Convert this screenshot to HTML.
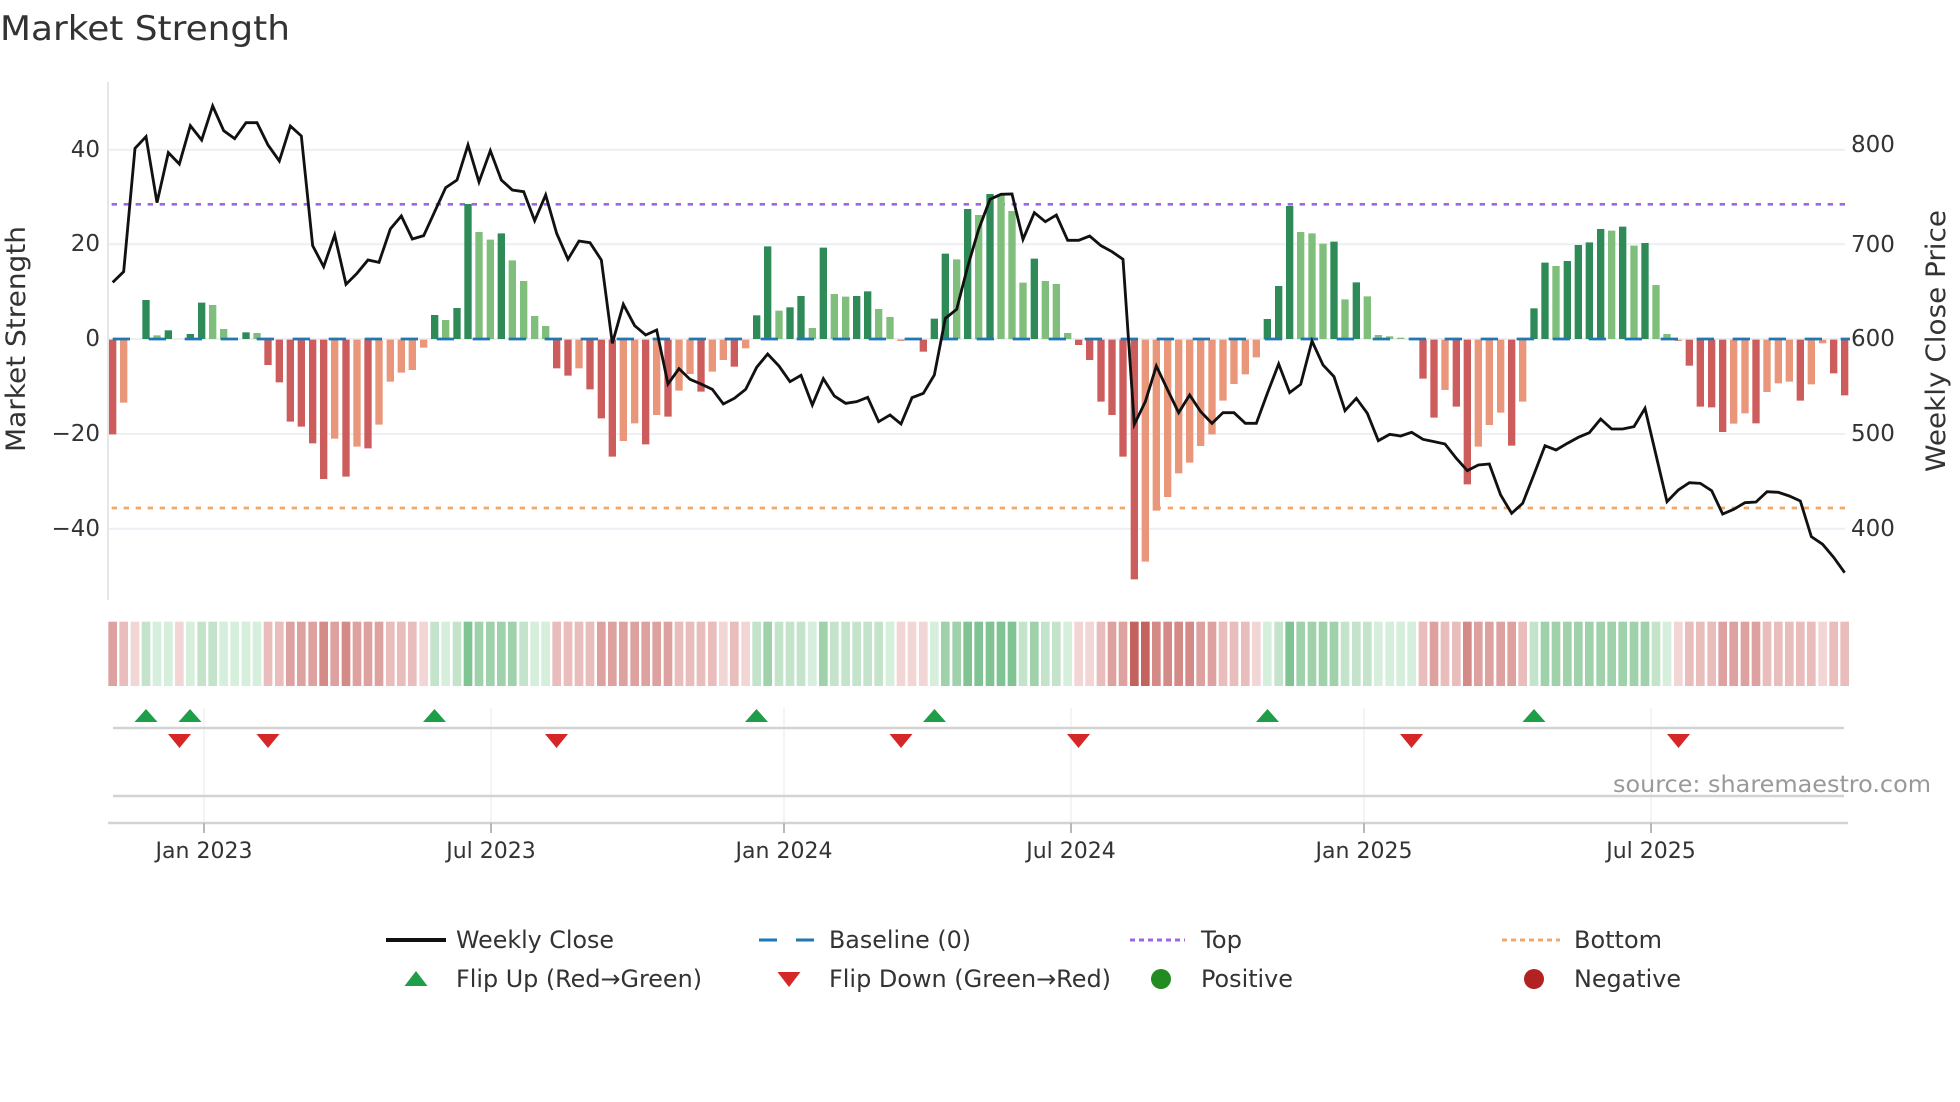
<!DOCTYPE html>
<html><head><meta charset="utf-8"><style>
html,body{margin:0;padding:0;background:#fff;width:1960px;height:1102px;overflow:hidden}
svg{display:block}
text{font-family:"DejaVu Sans","Liberation Sans",sans-serif;fill:#333}
.D{stroke:#2e8b57}.L{stroke:#7fbf7b}.R{stroke:#cd5c5c}.S{stroke:#e9967a}
.K1{fill:#c4625e}.K2{fill:#d48a87}.K3{fill:#dda2a0}.K4{fill:#e8bdbc}.K5{fill:#f2d6d6}
.G1{fill:#80c494}.G2{fill:#9fd2ab}.G3{fill:#c3e4ca}.G4{fill:#d6eedc}
</style></head><body>
<svg width="1960" height="1102" viewBox="0 0 1960 1102" xmlns="http://www.w3.org/2000/svg">
<text x="0" y="40" font-size="34" textLength="290" lengthAdjust="spacingAndGlyphs">Market Strength</text>
<g stroke="#eceff3" stroke-width="2">
<line x1="108" y1="149.7" x2="1845" y2="149.7"/><line x1="108" y1="244.3" x2="1845" y2="244.3"/>
<line x1="108" y1="339" x2="1845" y2="339"/><line x1="108" y1="434" x2="1845" y2="434"/>
<line x1="108" y1="528.7" x2="1845" y2="528.7"/>
</g>
<line x1="108" y1="82" x2="108" y2="600" stroke="#e6e6e6" stroke-width="2"/>
<g font-size="23" text-anchor="end" dominant-baseline="central">
<text x="100" y="150">40</text><text x="100" y="244">20</text><text x="100" y="339">0</text><text x="100" y="434">−20</text><text x="100" y="529">−40</text>
</g>
<g font-size="23" dominant-baseline="central">
<text x="1851" y="145">800</text><text x="1851" y="245">700</text><text x="1851" y="339">600</text><text x="1851" y="434">500</text><text x="1851" y="529">400</text>
</g>
<text transform="translate(25,339) rotate(-90)" font-size="27" text-anchor="middle" textLength="226" lengthAdjust="spacingAndGlyphs">Market Strength</text>
<text transform="translate(1945,341) rotate(-90)" font-size="27" text-anchor="middle" textLength="262" lengthAdjust="spacingAndGlyphs">Weekly Close Price</text>

<g transform="translate(105,80) scale(0.333333)">
<line x1="20" y1="373" x2="5230" y2="373" stroke="#a066e0" stroke-width="8" stroke-dasharray="16 20"/>
<line x1="20" y1="1284" x2="5230" y2="1284" stroke="#f0a868" stroke-width="8" stroke-dasharray="16 20"/>
<g stroke-width="22">
<line class="R" x1="23" y1="779" x2="23" y2="1063"/><line class="S" x1="56" y1="779" x2="56" y2="968"/>
<line class="D" x1="123" y1="777" x2="123" y2="660"/><line class="L" x1="156" y1="777" x2="156" y2="766"/>
<line class="D" x1="190" y1="777" x2="190" y2="751"/><line class="D" x1="256" y1="777" x2="256" y2="762"/>
<line class="D" x1="290" y1="777" x2="290" y2="668"/><line class="L" x1="323" y1="777" x2="323" y2="675"/>
<line class="L" x1="356" y1="777" x2="356" y2="747"/><line class="D" x1="423" y1="777" x2="423" y2="757"/>
<line class="L" x1="456" y1="777" x2="456" y2="759"/><line class="R" x1="489" y1="779" x2="489" y2="855"/>
<line class="R" x1="523" y1="779" x2="523" y2="907"/><line class="R" x1="556" y1="779" x2="556" y2="1025"/>
<line class="R" x1="589" y1="779" x2="589" y2="1040"/><line class="R" x1="623" y1="779" x2="623" y2="1090"/>
<line class="R" x1="656" y1="779" x2="656" y2="1197"/><line class="S" x1="689" y1="779" x2="689" y2="1076"/>
<line class="R" x1="723" y1="779" x2="723" y2="1190"/><line class="S" x1="756" y1="779" x2="756" y2="1100"/>
<line class="R" x1="789" y1="779" x2="789" y2="1105"/><line class="S" x1="822" y1="779" x2="822" y2="1034"/>
<line class="S" x1="856" y1="779" x2="856" y2="905"/><line class="S" x1="889" y1="779" x2="889" y2="878"/>
<line class="S" x1="922" y1="779" x2="922" y2="870"/><line class="S" x1="956" y1="779" x2="956" y2="803"/>
<line class="D" x1="989" y1="777" x2="989" y2="705"/><line class="L" x1="1022" y1="777" x2="1022" y2="720"/>
<line class="D" x1="1056" y1="777" x2="1056" y2="684"/><line class="D" x1="1089" y1="777" x2="1089" y2="372"/>
<line class="L" x1="1122" y1="777" x2="1122" y2="456"/><line class="L" x1="1156" y1="777" x2="1156" y2="479"/>
<line class="D" x1="1189" y1="777" x2="1189" y2="460"/><line class="L" x1="1222" y1="777" x2="1222" y2="541"/>
<line class="L" x1="1256" y1="777" x2="1256" y2="603"/><line class="L" x1="1289" y1="777" x2="1289" y2="708"/>
<line class="L" x1="1322" y1="777" x2="1322" y2="738"/><line class="R" x1="1355" y1="779" x2="1355" y2="865"/>
<line class="R" x1="1389" y1="779" x2="1389" y2="887"/><line class="S" x1="1422" y1="779" x2="1422" y2="865"/>
<line class="R" x1="1455" y1="779" x2="1455" y2="928"/><line class="R" x1="1489" y1="779" x2="1489" y2="1015"/>
<line class="R" x1="1522" y1="779" x2="1522" y2="1130"/><line class="S" x1="1555" y1="779" x2="1555" y2="1083"/>
<line class="S" x1="1589" y1="779" x2="1589" y2="1030"/><line class="R" x1="1622" y1="779" x2="1622" y2="1093"/>
<line class="S" x1="1655" y1="779" x2="1655" y2="1005"/><line class="R" x1="1689" y1="779" x2="1689" y2="1010"/>
<line class="S" x1="1722" y1="779" x2="1722" y2="932"/><line class="S" x1="1755" y1="779" x2="1755" y2="882"/>
<line class="R" x1="1788" y1="779" x2="1788" y2="935"/><line class="S" x1="1822" y1="779" x2="1822" y2="875"/>
<line class="S" x1="1855" y1="779" x2="1855" y2="840"/><line class="R" x1="1888" y1="779" x2="1888" y2="860"/>
<line class="S" x1="1922" y1="779" x2="1922" y2="805"/><line class="D" x1="1955" y1="777" x2="1955" y2="706"/>
<line class="D" x1="1988" y1="777" x2="1988" y2="499"/><line class="L" x1="2022" y1="777" x2="2022" y2="692"/>
<line class="D" x1="2055" y1="777" x2="2055" y2="682"/><line class="D" x1="2088" y1="777" x2="2088" y2="648"/>
<line class="L" x1="2122" y1="777" x2="2122" y2="744"/><line class="D" x1="2155" y1="777" x2="2155" y2="503"/>
<line class="L" x1="2188" y1="777" x2="2188" y2="642"/><line class="L" x1="2222" y1="777" x2="2222" y2="650"/>
<line class="D" x1="2255" y1="777" x2="2255" y2="648"/><line class="D" x1="2288" y1="777" x2="2288" y2="634"/>
<line class="L" x1="2321" y1="777" x2="2321" y2="687"/><line class="L" x1="2355" y1="777" x2="2355" y2="711"/>
<line class="R" x1="2388" y1="779" x2="2388" y2="782"/><line class="R" x1="2455" y1="779" x2="2455" y2="815"/>
<line class="D" x1="2488" y1="777" x2="2488" y2="716"/><line class="D" x1="2521" y1="777" x2="2521" y2="521"/>
<line class="L" x1="2555" y1="777" x2="2555" y2="538"/><line class="D" x1="2588" y1="777" x2="2588" y2="387"/>
<line class="L" x1="2621" y1="777" x2="2621" y2="405"/><line class="D" x1="2655" y1="777" x2="2655" y2="342"/>
<line class="L" x1="2688" y1="777" x2="2688" y2="345"/><line class="L" x1="2721" y1="777" x2="2721" y2="393"/>
<line class="L" x1="2754" y1="777" x2="2754" y2="608"/><line class="D" x1="2788" y1="777" x2="2788" y2="536"/>
<line class="L" x1="2821" y1="777" x2="2821" y2="603"/><line class="L" x1="2854" y1="777" x2="2854" y2="612"/>
<line class="L" x1="2888" y1="777" x2="2888" y2="759"/><line class="R" x1="2921" y1="779" x2="2921" y2="795"/>
<line class="R" x1="2954" y1="779" x2="2954" y2="840"/><line class="R" x1="2988" y1="779" x2="2988" y2="965"/>
<line class="R" x1="3021" y1="779" x2="3021" y2="1005"/><line class="R" x1="3054" y1="779" x2="3054" y2="1130"/>
<line class="R" x1="3088" y1="779" x2="3088" y2="1498"/><line class="S" x1="3121" y1="779" x2="3121" y2="1445"/>
<line class="S" x1="3154" y1="779" x2="3154" y2="1292"/><line class="S" x1="3188" y1="779" x2="3188" y2="1251"/>
<line class="S" x1="3221" y1="779" x2="3221" y2="1180"/><line class="S" x1="3254" y1="779" x2="3254" y2="1148"/>
<line class="S" x1="3287" y1="779" x2="3287" y2="1098"/><line class="S" x1="3321" y1="779" x2="3321" y2="1063"/>
<line class="S" x1="3354" y1="779" x2="3354" y2="962"/><line class="S" x1="3387" y1="779" x2="3387" y2="912"/>
<line class="S" x1="3421" y1="779" x2="3421" y2="883"/><line class="S" x1="3454" y1="779" x2="3454" y2="832"/>
<line class="D" x1="3487" y1="777" x2="3487" y2="717"/><line class="D" x1="3521" y1="777" x2="3521" y2="618"/>
<line class="D" x1="3554" y1="777" x2="3554" y2="378"/><line class="L" x1="3587" y1="777" x2="3587" y2="456"/>
<line class="L" x1="3621" y1="777" x2="3621" y2="460"/><line class="L" x1="3654" y1="777" x2="3654" y2="491"/>
<line class="D" x1="3687" y1="777" x2="3687" y2="485"/><line class="L" x1="3720" y1="777" x2="3720" y2="658"/>
<line class="D" x1="3754" y1="777" x2="3754" y2="607"/><line class="L" x1="3787" y1="777" x2="3787" y2="649"/>
<line class="L" x1="3820" y1="777" x2="3820" y2="765"/><line class="L" x1="3854" y1="777" x2="3854" y2="769"/>
<line class="L" x1="3887" y1="777" x2="3887" y2="773"/><line class="R" x1="3954" y1="779" x2="3954" y2="896"/>
<line class="R" x1="3987" y1="779" x2="3987" y2="1013"/><line class="S" x1="4020" y1="779" x2="4020" y2="930"/>
<line class="R" x1="4054" y1="779" x2="4054" y2="980"/><line class="R" x1="4087" y1="779" x2="4087" y2="1213"/>
<line class="S" x1="4120" y1="779" x2="4120" y2="1100"/><line class="S" x1="4153" y1="779" x2="4153" y2="1035"/>
<line class="S" x1="4187" y1="779" x2="4187" y2="998"/><line class="R" x1="4220" y1="779" x2="4220" y2="1097"/>
<line class="S" x1="4253" y1="779" x2="4253" y2="965"/><line class="D" x1="4287" y1="777" x2="4287" y2="685"/>
<line class="D" x1="4320" y1="777" x2="4320" y2="548"/><line class="L" x1="4353" y1="777" x2="4353" y2="558"/>
<line class="D" x1="4387" y1="777" x2="4387" y2="543"/><line class="D" x1="4420" y1="777" x2="4420" y2="495"/>
<line class="D" x1="4453" y1="777" x2="4453" y2="487"/><line class="D" x1="4487" y1="777" x2="4487" y2="447"/>
<line class="L" x1="4520" y1="777" x2="4520" y2="452"/><line class="D" x1="4553" y1="777" x2="4553" y2="440"/>
<line class="L" x1="4587" y1="777" x2="4587" y2="497"/><line class="D" x1="4620" y1="777" x2="4620" y2="489"/>
<line class="L" x1="4653" y1="777" x2="4653" y2="615"/><line class="L" x1="4686" y1="777" x2="4686" y2="762"/>
<line class="S" x1="4720" y1="779" x2="4720" y2="783"/><line class="R" x1="4753" y1="779" x2="4753" y2="857"/>
<line class="R" x1="4786" y1="779" x2="4786" y2="980"/><line class="R" x1="4820" y1="779" x2="4820" y2="982"/>
<line class="R" x1="4853" y1="779" x2="4853" y2="1056"/><line class="S" x1="4886" y1="779" x2="4886" y2="1031"/>
<line class="S" x1="4920" y1="779" x2="4920" y2="1000"/><line class="R" x1="4953" y1="779" x2="4953" y2="1030"/>
<line class="S" x1="4986" y1="779" x2="4986" y2="936"/><line class="S" x1="5020" y1="779" x2="5020" y2="910"/>
<line class="S" x1="5053" y1="779" x2="5053" y2="905"/><line class="R" x1="5086" y1="779" x2="5086" y2="962"/>
<line class="S" x1="5119" y1="779" x2="5119" y2="913"/><line class="S" x1="5153" y1="779" x2="5153" y2="790"/>
<line class="R" x1="5186" y1="779" x2="5186" y2="880"/><line class="R" x1="5219" y1="779" x2="5219" y2="946"/>
</g>
<line x1="23" y1="777" x2="5235" y2="777" stroke="#1f77b4" stroke-width="8" stroke-dasharray="52 56"/>
<polyline fill="none" stroke="#111" stroke-width="8.5" stroke-linejoin="miter" points="23,607 56,575 90,205 123,170 156,368 190,218 223,252 256,137 290,180 323,78 356,152 389,176 423,128 456,128 489,195 523,243 556,138 589,168 623,497 656,560 689,465 723,613 756,580 789,540 822,547 856,447 889,408 922,477 956,467 989,395 1022,323 1056,300 1089,195 1122,306 1156,212 1189,300 1222,330 1256,335 1289,422 1322,345 1355,460 1389,538 1422,483 1455,488 1489,540 1522,790 1555,673 1589,737 1622,765 1655,750 1689,912 1722,866 1755,898 1788,912 1822,928 1855,972 1888,955 1922,928 1955,862 1988,822 2022,858 2055,905 2088,886 2122,975 2155,896 2188,948 2222,970 2255,965 2288,952 2321,1025 2355,1005 2388,1032 2421,953 2455,940 2488,885 2521,715 2555,688 2588,560 2621,448 2655,358 2688,343 2721,342 2754,478 2788,398 2821,425 2854,405 2888,481 2921,481 2954,468 2988,497 3021,515 3054,538 3088,1033 3121,965 3154,858 3188,930 3221,998 3254,945 3287,995 3321,1030 3354,998 3387,998 3421,1030 3454,1030 3487,940 3521,852 3554,938 3587,913 3621,783 3654,855 3687,890 3720,992 3754,955 3787,1000 3820,1082 3854,1063 3887,1068 3920,1057 3954,1078 3987,1085 4020,1092 4054,1135 4087,1172 4120,1155 4153,1152 4187,1245 4220,1300 4253,1270 4287,1183 4320,1097 4353,1110 4387,1090 4420,1072 4453,1058 4487,1017 4520,1047 4553,1047 4587,1040 4620,985 4653,1125 4686,1265 4720,1230 4753,1208 4786,1210 4820,1232 4853,1302 4886,1288 4920,1268 4953,1266 4986,1235 5020,1237 5053,1248 5086,1263 5119,1370 5153,1393 5186,1432 5219,1478"/>
<g transform="translate(-13,1625)">
<rect class="K3" x="23" width="26" height="193"/><rect class="K4" x="56" width="26" height="193"/><rect class="K5" x="90" width="26" height="193"/><rect class="G3" x="123" width="26" height="193"/><rect class="G4" x="156" width="26" height="193"/><rect class="G4" x="190" width="26" height="193"/><rect class="K5" x="223" width="26" height="193"/><rect class="G4" x="256" width="26" height="193"/><rect class="G3" x="290" width="26" height="193"/><rect class="G3" x="323" width="26" height="193"/><rect class="G4" x="356" width="26" height="193"/><rect class="G4" x="389" width="26" height="193"/><rect class="G4" x="423" width="26" height="193"/><rect class="G4" x="456" width="26" height="193"/>
<rect class="K4" x="489" width="26" height="193"/><rect class="K4" x="523" width="26" height="193"/><rect class="K3" x="556" width="26" height="193"/><rect class="K3" x="589" width="26" height="193"/><rect class="K3" x="623" width="26" height="193"/><rect class="K2" x="656" width="26" height="193"/><rect class="K3" x="689" width="26" height="193"/><rect class="K2" x="723" width="26" height="193"/><rect class="K3" x="756" width="26" height="193"/><rect class="K3" x="789" width="26" height="193"/><rect class="K3" x="822" width="26" height="193"/><rect class="K4" x="856" width="26" height="193"/><rect class="K4" x="889" width="26" height="193"/><rect class="K4" x="922" width="26" height="193"/><rect class="K5" x="956" width="26" height="193"/>
<rect class="G3" x="989" width="26" height="193"/><rect class="G4" x="1022" width="26" height="193"/><rect class="G3" x="1056" width="26" height="193"/><rect class="G1" x="1089" width="26" height="193"/><rect class="G2" x="1122" width="26" height="193"/><rect class="G2" x="1156" width="26" height="193"/><rect class="G2" x="1189" width="26" height="193"/><rect class="G2" x="1222" width="26" height="193"/><rect class="G3" x="1256" width="26" height="193"/><rect class="G4" x="1289" width="26" height="193"/><rect class="G4" x="1322" width="26" height="193"/>
<rect class="K4" x="1355" width="26" height="193"/><rect class="K4" x="1389" width="26" height="193"/><rect class="K4" x="1422" width="26" height="193"/><rect class="K4" x="1455" width="26" height="193"/><rect class="K3" x="1489" width="26" height="193"/><rect class="K3" x="1522" width="26" height="193"/><rect class="K3" x="1555" width="26" height="193"/><rect class="K3" x="1589" width="26" height="193"/><rect class="K3" x="1622" width="26" height="193"/><rect class="K3" x="1655" width="26" height="193"/><rect class="K3" x="1689" width="26" height="193"/><rect class="K4" x="1722" width="26" height="193"/><rect class="K4" x="1755" width="26" height="193"/><rect class="K4" x="1788" width="26" height="193"/><rect class="K4" x="1822" width="26" height="193"/><rect class="K5" x="1855" width="26" height="193"/><rect class="K4" x="1888" width="26" height="193"/><rect class="K5" x="1922" width="26" height="193"/>
<rect class="G3" x="1955" width="26" height="193"/><rect class="G2" x="1988" width="26" height="193"/><rect class="G3" x="2022" width="26" height="193"/><rect class="G3" x="2055" width="26" height="193"/><rect class="G3" x="2088" width="26" height="193"/><rect class="G4" x="2122" width="26" height="193"/><rect class="G2" x="2155" width="26" height="193"/><rect class="G3" x="2188" width="26" height="193"/><rect class="G3" x="2222" width="26" height="193"/><rect class="G3" x="2255" width="26" height="193"/><rect class="G3" x="2288" width="26" height="193"/><rect class="G3" x="2321" width="26" height="193"/><rect class="G4" x="2355" width="26" height="193"/>
<rect class="K5" x="2388" width="26" height="193"/><rect class="K5" x="2421" width="26" height="193"/><rect class="K5" x="2455" width="26" height="193"/>
<rect class="G4" x="2488" width="26" height="193"/><rect class="G2" x="2521" width="26" height="193"/><rect class="G2" x="2555" width="26" height="193"/><rect class="G1" x="2588" width="26" height="193"/><rect class="G1" x="2621" width="26" height="193"/><rect class="G1" x="2655" width="26" height="193"/><rect class="G1" x="2688" width="26" height="193"/><rect class="G1" x="2721" width="26" height="193"/><rect class="G3" x="2754" width="26" height="193"/><rect class="G2" x="2788" width="26" height="193"/><rect class="G3" x="2821" width="26" height="193"/><rect class="G3" x="2854" width="26" height="193"/><rect class="G4" x="2888" width="26" height="193"/>
<rect class="K5" x="2921" width="26" height="193"/><rect class="K5" x="2954" width="26" height="193"/><rect class="K4" x="2988" width="26" height="193"/><rect class="K3" x="3021" width="26" height="193"/><rect class="K3" x="3054" width="26" height="193"/><rect class="K1" x="3088" width="26" height="193"/><rect class="K1" x="3121" width="26" height="193"/><rect class="K2" x="3154" width="26" height="193"/><rect class="K2" x="3188" width="26" height="193"/><rect class="K2" x="3221" width="26" height="193"/><rect class="K2" x="3254" width="26" height="193"/><rect class="K3" x="3287" width="26" height="193"/><rect class="K3" x="3321" width="26" height="193"/><rect class="K4" x="3354" width="26" height="193"/><rect class="K4" x="3387" width="26" height="193"/><rect class="K4" x="3421" width="26" height="193"/><rect class="K5" x="3454" width="26" height="193"/>
<rect class="G4" x="3487" width="26" height="193"/><rect class="G3" x="3521" width="26" height="193"/><rect class="G1" x="3554" width="26" height="193"/><rect class="G2" x="3587" width="26" height="193"/><rect class="G2" x="3621" width="26" height="193"/><rect class="G2" x="3654" width="26" height="193"/><rect class="G2" x="3687" width="26" height="193"/><rect class="G3" x="3720" width="26" height="193"/><rect class="G3" x="3754" width="26" height="193"/><rect class="G3" x="3787" width="26" height="193"/><rect class="G4" x="3820" width="26" height="193"/><rect class="G4" x="3854" width="26" height="193"/><rect class="G4" x="3887" width="26" height="193"/><rect class="G4" x="3920" width="26" height="193"/>
<rect class="K4" x="3954" width="26" height="193"/><rect class="K3" x="3987" width="26" height="193"/><rect class="K4" x="4020" width="26" height="193"/><rect class="K4" x="4054" width="26" height="193"/><rect class="K2" x="4087" width="26" height="193"/><rect class="K3" x="4120" width="26" height="193"/><rect class="K3" x="4153" width="26" height="193"/><rect class="K3" x="4187" width="26" height="193"/><rect class="K3" x="4220" width="26" height="193"/><rect class="K4" x="4253" width="26" height="193"/>
<rect class="G3" x="4287" width="26" height="193"/><rect class="G2" x="4320" width="26" height="193"/><rect class="G2" x="4353" width="26" height="193"/><rect class="G2" x="4387" width="26" height="193"/><rect class="G2" x="4420" width="26" height="193"/><rect class="G2" x="4453" width="26" height="193"/><rect class="G2" x="4487" width="26" height="193"/><rect class="G2" x="4520" width="26" height="193"/><rect class="G2" x="4553" width="26" height="193"/><rect class="G2" x="4587" width="26" height="193"/><rect class="G2" x="4620" width="26" height="193"/><rect class="G3" x="4653" width="26" height="193"/><rect class="G4" x="4686" width="26" height="193"/>
<rect class="K5" x="4720" width="26" height="193"/><rect class="K4" x="4753" width="26" height="193"/><rect class="K4" x="4786" width="26" height="193"/><rect class="K4" x="4820" width="26" height="193"/><rect class="K3" x="4853" width="26" height="193"/><rect class="K3" x="4886" width="26" height="193"/><rect class="K3" x="4920" width="26" height="193"/><rect class="K3" x="4953" width="26" height="193"/><rect class="K4" x="4986" width="26" height="193"/><rect class="K4" x="5020" width="26" height="193"/><rect class="K4" x="5053" width="26" height="193"/><rect class="K4" x="5086" width="26" height="193"/><rect class="K4" x="5119" width="26" height="193"/><rect class="K5" x="5153" width="26" height="193"/><rect class="K4" x="5186" width="26" height="193"/><rect class="K4" x="5219" width="26" height="193"/>
</g>
</g>

<g stroke="#eef0f3" stroke-width="1.5">
<line x1="204" y1="708" x2="204" y2="822"/><line x1="491" y1="708" x2="491" y2="822"/><line x1="784" y1="708" x2="784" y2="822"/><line x1="1071" y1="708" x2="1071" y2="822"/><line x1="1364" y1="708" x2="1364" y2="822"/><line x1="1651" y1="708" x2="1651" y2="822"/>
</g>
<line x1="113" y1="728" x2="1844" y2="728" stroke="#d3d3d3" stroke-width="2.5"/>
<line x1="113" y1="796" x2="1844" y2="796" stroke="#d3d3d3" stroke-width="2.5"/>
<line x1="108" y1="823" x2="1848" y2="823" stroke="#d3d3d3" stroke-width="2.5"/>
<g stroke="#b8b8b8" stroke-width="2">
<line x1="204" y1="823" x2="204" y2="833"/><line x1="491" y1="823" x2="491" y2="833"/><line x1="784" y1="823" x2="784" y2="833"/><line x1="1071" y1="823" x2="1071" y2="833"/><line x1="1364" y1="823" x2="1364" y2="833"/><line x1="1651" y1="823" x2="1651" y2="833"/>
</g>
<g fill="#1e9e48">
<path d="M134.5 722 L146 709 L157.5 722Z"/><path d="M178.5 722 L190 709 L201.5 722Z"/><path d="M423 722 L434.5 709 L446 722Z"/><path d="M745 722 L756.5 709 L768 722Z"/><path d="M923 722 L934.5 709 L946 722Z"/><path d="M1256 722 L1267.5 709 L1279 722Z"/><path d="M1522.5 722 L1534 709 L1545.5 722Z"/>
</g>
<g fill="#d62728">
<path d="M168 734 L191 734 L179.5 748Z"/><path d="M256.5 734 L279.5 734 L268 748Z"/><path d="M545 734 L568 734 L556.5 748Z"/><path d="M889.5 734 L912.5 734 L901 748Z"/><path d="M1067 734 L1090 734 L1078.5 748Z"/><path d="M1400 734 L1423 734 L1411.5 748Z"/><path d="M1667 734 L1690 734 L1678.5 748Z"/>
</g>
<text x="1931" y="792" font-size="23" text-anchor="end" style="fill:#999" textLength="318" lengthAdjust="spacingAndGlyphs">source: sharemaestro.com</text>
<g font-size="22" text-anchor="middle">
<text x="204" y="858">Jan 2023</text><text x="491" y="858">Jul 2023</text><text x="784" y="858">Jan 2024</text><text x="1071" y="858">Jul 2024</text><text x="1364" y="858">Jan 2025</text><text x="1651" y="858">Jul 2025</text>
</g>
<line x1="386" y1="940" x2="446" y2="940" stroke="#111" stroke-width="4"/>
<line x1="759" y1="940" x2="814" y2="940" stroke="#1f77b4" stroke-width="3" stroke-dasharray="18 19"/>
<line x1="1130" y1="940" x2="1185" y2="940" stroke="#a066e0" stroke-width="3" stroke-dasharray="5 4"/>
<line x1="1502" y1="940" x2="1560" y2="940" stroke="#f0a868" stroke-width="3" stroke-dasharray="5 4"/>
<path d="M404.5 986 L416 971 L427.5 986Z" fill="#1e9e48"/>
<path d="M777.5 972 L800.5 972 L789 987Z" fill="#d62728"/>
<circle cx="1161" cy="979" r="10" fill="#228b22"/>
<circle cx="1534" cy="979" r="10" fill="#b22222"/>
<g font-size="24" dominant-baseline="central">
<text x="456" y="940" textLength="158" lengthAdjust="spacingAndGlyphs">Weekly Close</text>
<text x="829" y="940" textLength="142" lengthAdjust="spacingAndGlyphs">Baseline (0)</text>
<text x="1201" y="940" textLength="41" lengthAdjust="spacingAndGlyphs">Top</text>
<text x="1574" y="940" textLength="88" lengthAdjust="spacingAndGlyphs">Bottom</text>
<text x="456" y="979" textLength="246" lengthAdjust="spacingAndGlyphs">Flip Up (Red→Green)</text>
<text x="829" y="979" textLength="282" lengthAdjust="spacingAndGlyphs">Flip Down (Green→Red)</text>
<text x="1201" y="979" textLength="92" lengthAdjust="spacingAndGlyphs">Positive</text>
<text x="1574" y="979" textLength="107" lengthAdjust="spacingAndGlyphs">Negative</text>
</g>
</svg>
</body></html>
